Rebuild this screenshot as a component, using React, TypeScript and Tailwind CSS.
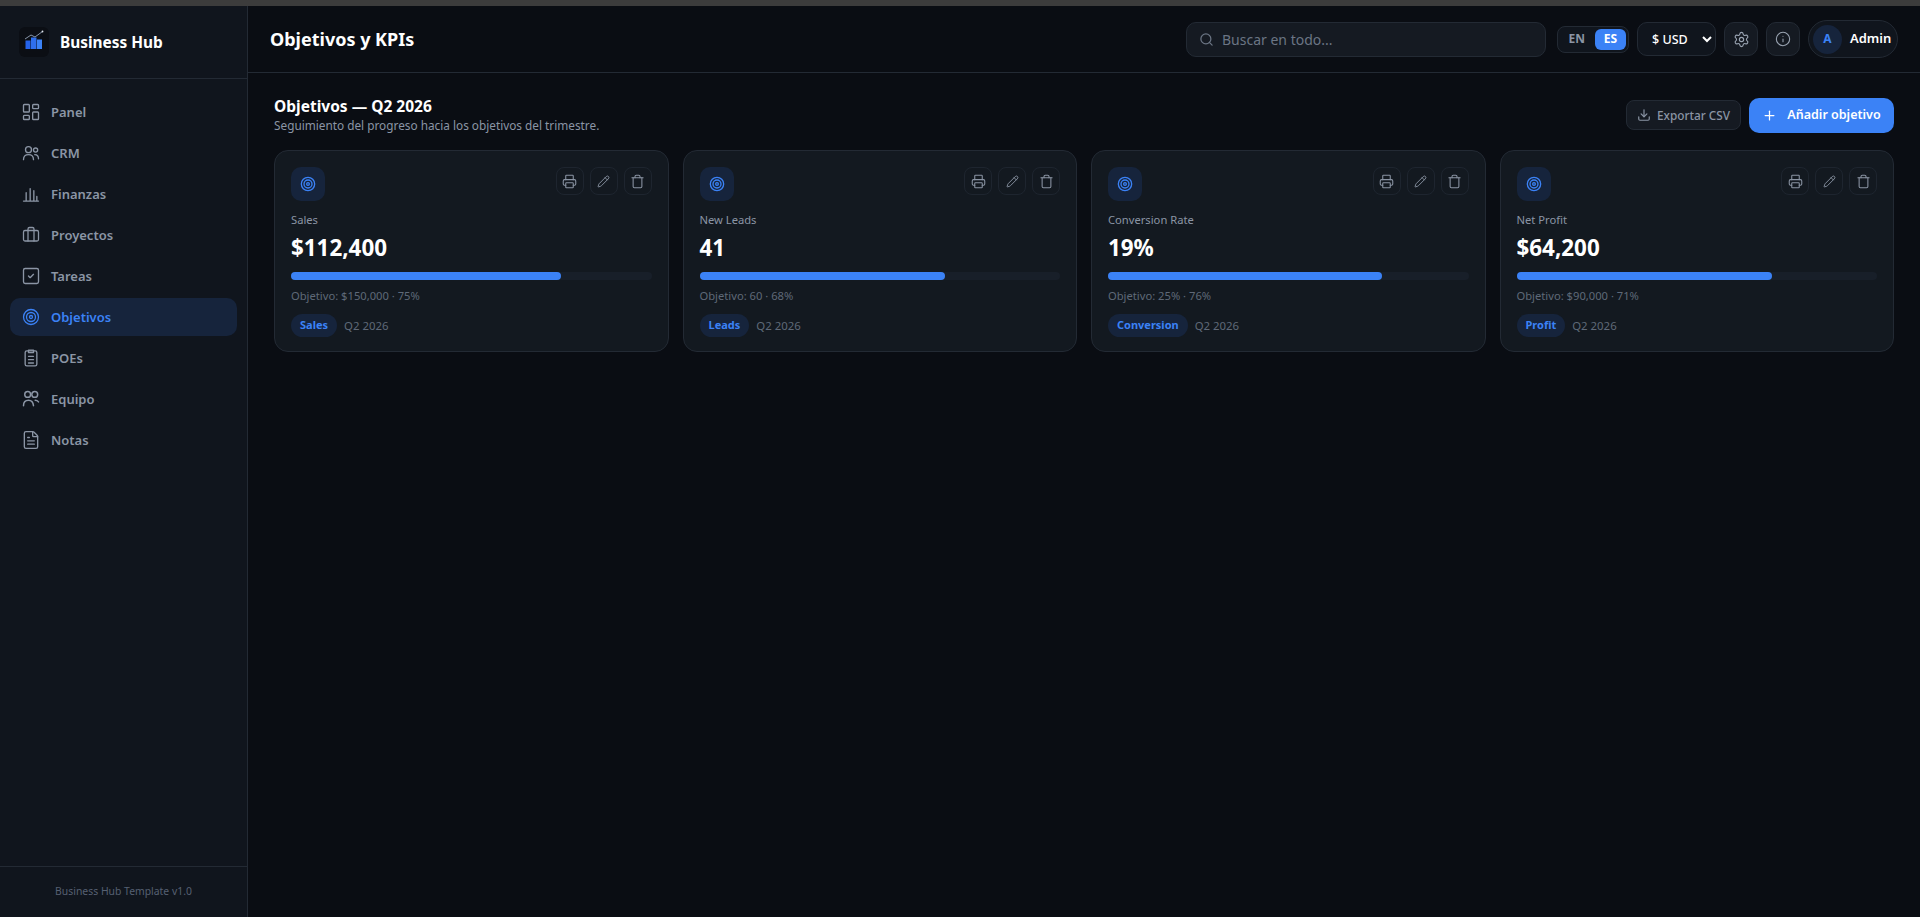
import React from 'react';
import {
  Briefcase,
  Download,
  FileText,
  Info,
  LayoutDashboard,
  Pencil,
  Plus,
  Printer,
  Search,
  Settings,
  SquareCheck,
  Target,
  Trash,
} from 'lucide-react';

const BarsIcon = () => (
  <svg width="20" height="20" viewBox="0 0 24 24" fill="none" stroke="currentColor" strokeWidth="1.6" strokeLinecap="round">
    <path d="M3 20.5h18M6.2 20v-9.5M11 20V5.5M15.4 20V8M19 20v-5" />
  </svg>
);

const ClipIcon = () => (
  <svg width="20" height="20" viewBox="0 0 24 24" fill="none" stroke="currentColor" strokeWidth="1.6" strokeLinecap="round" strokeLinejoin="round">
    <rect x="5" y="3.5" width="14" height="18" rx="2" />
    <path d="M9 2.5h6v3H9zM9 10h6M9 14h6M9 18h6" />
  </svg>
);

const CrmIcon = () => (
  <svg width="20" height="20" viewBox="0 0 24 24" fill="none" stroke="currentColor" strokeWidth="1.6" strokeLinecap="round" strokeLinejoin="round">
    <circle cx="9" cy="8" r="3.6" />
    <circle cx="17.5" cy="8.5" r="2.5" />
    <path d="M3 20c0-3.8 2.6-6 6-6s6 2.2 6 6M16.5 14c2.8 0 4.5 2 4.5 5" />
  </svg>
);

const TeamIcon = () => (
  <svg width="20" height="20" viewBox="0 0 24 24" fill="none" stroke="currentColor" strokeWidth="1.8" strokeLinecap="round" strokeLinejoin="round">
    <circle cx="8" cy="6.5" r="3.5" />
    <circle cx="16.5" cy="6.5" r="3.5" />
    <path d="M3 20c0-4 2.4-6.5 6-6.5 3.4 0 5.6 2.5 6 6.5M17 13.5c1.5 0 3 .7 4 2" />
  </svg>
);

const LogoIcon = () => (
  <div className="w-[30px] h-[30px] rounded-md bg-[#0b0e14] shrink-0">
    <svg width="30" height="30" viewBox="0 0 30 30" fill="none">
      <rect x="6.5" y="13.5" width="5" height="8.5" fill="#2563eb" />
      <rect x="12" y="10.5" width="5.5" height="11.5" fill="#2f6fed" />
      <rect x="18" y="12.5" width="5" height="9.5" fill="#3b82f6" />
      <path d="M6 12l6-4 4 2 7.5-5.5" stroke="#94a3b8" strokeWidth="0.9" />
      <circle cx="23.5" cy="4.5" r="0.9" fill="#e2e8f0" />
    </svg>
  </div>
);

const navItems = [
  { label: 'Panel', icon: <LayoutDashboard size={20} strokeWidth={1.6} /> },
  { label: 'CRM', icon: <CrmIcon /> },
  { label: 'Finanzas', icon: <BarsIcon /> },
  { label: 'Proyectos', icon: <Briefcase size={18} strokeWidth={1.7} /> },
  { label: 'Tareas', icon: <SquareCheck size={20} strokeWidth={1.6} /> },
  { label: 'Objetivos', icon: <Target size={18} strokeWidth={1.7} />, active: true },
  { label: 'POEs', icon: <ClipIcon /> },
  { label: 'Equipo', icon: <TeamIcon /> },
  { label: 'Notas', icon: <FileText size={20} strokeWidth={1.6} /> },
];

const goals = [
  { name: 'Sales', value: '$112,400', pct: 75, target: 'Objetivo: $150,000 · 75%', tag: 'Sales' },
  { name: 'New Leads', value: '41', pct: 68, target: 'Objetivo: 60 · 68%', tag: 'Leads' },
  { name: 'Conversion Rate', value: '19%', pct: 76, target: 'Objetivo: 25% · 76%', tag: 'Conversion' },
  { name: 'Net Profit', value: '$64,200', pct: 71, target: 'Objetivo: $90,000 · 71%', tag: 'Profit' },
];

const ActionButton = ({ children }: { children: React.ReactNode }) => (
  <button className="w-7 h-7 rounded-lg border border-[#1e252f] text-[#8a94a3] flex items-center justify-center">
    {children}
  </button>
);

const Sidebar = () => (
  <aside className="w-[248px] shrink-0 bg-[#10151d] border-r border-[#232a34] flex flex-col">
    <div className="h-[73px] border-b border-[#232a34] flex items-center gap-[11px] px-[19px]">
      <LogoIcon />
      <span className="mt-[2px] text-[15.4px] font-bold text-white">Business Hub</span>
    </div>
    <nav className="flex-1 px-[10px] pt-[14px] flex flex-col gap-[3px]">
      {navItems.map((item) => (
        <a
          key={item.label}
          href="#"
          className={`h-[38px] rounded-[10px] flex items-center gap-[10px] px-[11px] text-[13px] font-semibold ${
            item.active ? 'bg-[#16243c] text-[#3b82f6]' : 'text-[#8b95a5]'
          }`}
        >
          <span className="w-5 h-5 flex items-center justify-center">{item.icon}</span>
          <span className="mt-[2px]">{item.label}</span>
        </a>
      ))}
    </nav>
    <div className="h-[51px] border-t border-[#232a34] flex items-center justify-center text-[10.4px] text-[#566072]">
      Business Hub Template v1.0
    </div>
  </aside>
);

const Topbar = () => (
  <header className="h-[67px] shrink-0 border-b border-[#232a34] bg-[#0a0d13] flex items-center justify-between pl-[22px] pr-[22px]">
    <h1 className="text-[18px] font-bold text-white">Objetivos y KPIs</h1>
    <div className="flex items-center gap-2">
      <div className="w-[360px] h-[35px] rounded-[10px] border border-[#232a34] bg-[#151a22] flex items-center gap-[8px] px-[12px] text-[14px] text-[#6b7584]">
        <Search size={15} />
        Buscar en todo...
      </div>
      <div className="ml-[3px] w-[72px] h-[27px] rounded-lg border border-[#232a34] bg-[#10151d] flex items-center justify-end gap-[4px] p-[2px] text-[12px] font-bold">
        <span className="text-[#8b95a5] px-[6px]">EN</span>
        <span className="w-[31px] h-[21px] rounded-md bg-[#3b82f6] text-white flex items-center justify-center">ES</span>
      </div>
      <select className="w-[79px] h-[34px] rounded-[10px] border border-[#232a34] bg-[#10151d] px-[10px] text-[12.5px] font-medium text-white">
        <option>$ USD</option>
      </select>
      <button className="w-[34px] h-[34px] rounded-[10px] border border-[#232a34] bg-[#151a22] text-[#9aa4b2] flex items-center justify-center">
        <Settings size={17} strokeWidth={1.6} />
      </button>
      <button className="w-[34px] h-[34px] rounded-[10px] border border-[#232a34] bg-[#151a22] text-[#9aa4b2] flex items-center justify-center">
        <Info size={16} strokeWidth={1.6} />
      </button>
      <div className="w-[90px] h-[38px] rounded-full border border-[#232a34] bg-[#10151d] flex items-center gap-[8px] pl-[4px]">
        <span className="w-[29px] h-[29px] rounded-full bg-[#16243c] text-[#3b82f6] text-[12px] font-bold flex items-center justify-center">A</span>
        <span className="text-[13px] font-semibold text-white">Admin</span>
      </div>
    </div>
  </header>
);

const GoalCard = ({ goal }: { goal: (typeof goals)[number] }) => (
  <div className="rounded-[14px] border border-[#232a34] bg-[#131920] pt-4 px-4 pb-[14px]">
    <div className="flex items-start justify-between h-[34px]">
      <div className="w-[34px] h-[34px] rounded-[10px] bg-[#16243c] text-[#3b82f6] flex items-center justify-center">
        <Target size={16} strokeWidth={2} />
      </div>
      <div className="flex gap-[6px]">
        <ActionButton><Printer size={15} strokeWidth={1.7} /></ActionButton>
        <ActionButton><Pencil size={13} strokeWidth={1.7} /></ActionButton>
        <ActionButton><Trash size={15} strokeWidth={1.7} /></ActionButton>
      </div>
    </div>
    <p className="mt-[10px] text-[11.2px] leading-[18px] text-[#8b95a5]">{goal.name}</p>
    <p className="mt-[4px] text-[22.4px] leading-[30px] font-bold text-white">{goal.value}</p>
    <div className="mt-[9px] h-2 rounded-full bg-[#181f29]">
      <div className="h-2 rounded-full bg-[#3b82f6]" style={{ width: `${goal.pct}%` }} />
    </div>
    <p className="mt-[7px] text-[11.2px] leading-[18px] text-[#5f6978]">{goal.target}</p>
    <div className="mt-[9px] flex items-center gap-[7px]">
      <span className="h-[23px] rounded-full bg-[#16243c] text-[#3b82f6] text-[11px] font-bold px-[9px] flex items-center">{goal.tag}</span>
      <span className="text-[11.4px] text-[#5f6978]">Q2 2026</span>
    </div>
  </div>
);

export default function App() {
  return (
    <div className="h-[917px] w-full overflow-hidden flex flex-col bg-[#0a0d13] font-['Noto_Sans',sans-serif]">
      <div className="h-[6px] shrink-0 bg-[#3c3c3c]" />
      <div className="flex-1 flex min-h-0">
        <Sidebar />
        <main className="flex-1 flex flex-col min-w-0">
          <Topbar />
          <div className="px-[26px] pt-[23px]">
            <div className="flex items-center justify-between h-[38px]">
              <div>
                <h2 className="text-[15.5px] leading-[20px] font-bold text-white">Objetivos — Q2 2026</h2>
                <p className="text-[11.8px] leading-[18px] text-[#8b95a5]">Seguimiento del progreso hacia los objetivos del trimestre.</p>
              </div>
              <div className="flex items-center gap-2">
                <button className="w-[115px] h-[30px] rounded-lg border border-[#232a34] bg-[#151a22] text-[#8b95a5] text-[11.8px] font-medium flex items-center justify-center gap-[6px]">
                  <Download size={14} />
                  <span className="mt-[1px]">Exportar CSV</span>
                </button>
                <button className="w-[145px] h-[35px] rounded-[10px] bg-[#3b82f6] text-white text-[12.5px] font-semibold flex items-center justify-center gap-[10px]">
                  <Plus size={15} />
                  <span className="mt-[1px]">Añadir objetivo</span>
                </button>
              </div>
            </div>
            <div className="mt-[16px] grid grid-cols-4 gap-[14px]">
              {goals.map((g) => (
                <GoalCard key={g.name} goal={g} />
              ))}
            </div>
          </div>
        </main>
      </div>
    </div>
  );
}
